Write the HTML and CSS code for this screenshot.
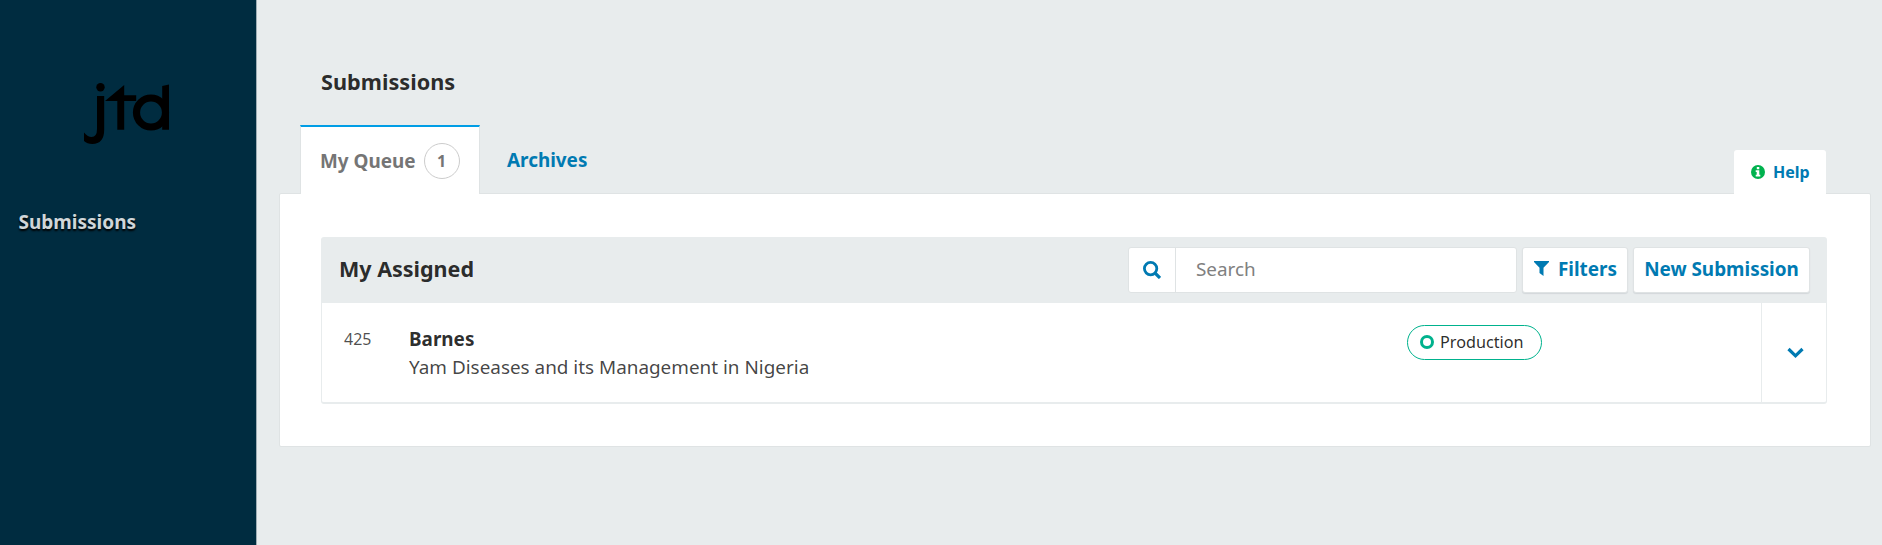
FILE: index.html
```html
<!DOCTYPE html>
<html lang="en">
<head>
<meta charset="utf-8">
<title>Submissions</title>
<link rel="stylesheet" href="styles.css">
</head>
<body>
<div class="app">
  <aside class="sidebar">
    <svg class="logo" width="96" height="70" viewBox="78 78 96 70" role="img" aria-label="jtd">
      <circle cx="100.5" cy="87.300" r="4.200"/>
      <path d="M97 96h7.200v33.500q0 14.500-12 14.500-5 0-8.200-3v-8.500q4 4.500 7.500 4.500 5.500 0 5.500-8z"/>
      <path d="M124.200 85v10.300h12v5.700h-12v28.700h-6.900v-28.700h-12.300z"/>
      <circle cx="151" cy="112.500" r="14.500" fill="none" stroke="#000" stroke-width="7.200"/>
      <path d="M162.200 86l6.800-1.500v45.200h-6.800z"/>
    </svg>
    <nav><a class="nav-link">Submissions</a></nav>
  </aside>
  <main class="main">
    <h1 class="page-title">Submissions</h1>
    <div class="tabs">
      <a class="tab tab-active">My Queue <span class="count">1</span></a>
      <a class="tab">Archives</a>
      <a class="help">
        <svg width="14" height="14" viewBox="0 0 14 14"><circle cx="7" cy="7" r="7" fill="#00b24e"/><path fill="#fff" d="M5.800 2h2.500v2.200H5.800zM4.700 5.300h3.600v4.500h1V11.500H4.700V9.800h1V7h-1z"/></svg>
        <span>Help</span>
      </a>
    </div>
    <section class="panel">
      <div class="list">
        <header class="list-header">
          <h2 class="list-title">My Assigned</h2>
          <div class="search">
            <span class="search-icon"><svg width="18" height="18" viewBox="0 0 18 18" fill="none" stroke="#007ab2"><circle cx="7.600" cy="7.600" r="6.200" stroke-width="2.800"/><path d="M12 12l5 5" stroke-width="3.200"/></svg></span>
            <span class="search-input">Search</span>
          </div>
          <button class="button filters"><svg width="15" height="15" viewBox="0 0 15 15"><path fill="#007ab2" d="M0 0h15v1L9.500 6.800V15L5.500 12V6.800L0 1z"/></svg><span>Filters</span></button>
          <button class="button new">New Submission</button>
        </header>
        <div class="item">
          <span class="item-id">425</span>
          <div class="item-body">
            <div class="item-author">Barnes</div>
            <div class="item-name">Yam Diseases and its Management in Nigeria</div>
          </div>
          <div class="stage"><span class="badge"><i class="dot"></i><span>Production</span></span></div>
          <button class="expander"><svg width="17" height="12" viewBox="0 0 17 12"><path d="M1.500 2L8.500 8.800 15.500 2" fill="none" stroke="#007ab2" stroke-width="3.200"/></svg></button>
        </div>
      </div>
    </section>
  </main>
</div>
</body>
</html>
```
FILE: styles.css
```css
* { box-sizing: border-box; }
body {
  margin: 0;
  background: #e8eced;
  color: rgba(0, 0, 0, 0.84);
  font-family: "Noto Sans", sans-serif;
  font-size: 18.9px;
}
.app { display: flex; height: 545px; overflow: hidden; }
.sidebar {
  width: 257px;
  flex: none;
  background: #002c40;
  border-right: 1px solid #9eadb4;
}
.logo { display: block; margin: 78px 0 0 78px; }
.nav-link {
  display: block;
  margin: 60px 0 0 18.500px;
  line-height: 28px;
  font-size: 19px;
  font-weight: 700;
  color: #d0d6d9;
  text-shadow: 0 2px 2px #000;
}
.main { flex: 1; padding: 61px 11px 0 22px; }
.page-title {
  margin: 0 0 0 42px;
  font-size: 21.7px;
  line-height: 41px;
  font-weight: 700;
}
.tabs {
  display: flex;
  height: 91px;
  padding: 23px 45px 0 21px;
}
.tab {
  display: flex;
  align-items: center;
  padding: 2px 0 0 26px;
  font-weight: 700;
  color: #007ab2;
}
.tab-active {
  width: 180px;
  height: 69px;
  padding: 0 0 0 19px;
  background: #fff;
  border: 1px solid #dfe3e4;
  border-top: 2px solid #009de5;
  border-bottom: 0;
  color: #757575;
  z-index: 1;
}
.tab-active + .tab { padding-left: 27px; }
.count {
  width: 36px;
  height: 36px;
  margin-left: 8px;
  border: 1px solid #ccc;
  border-radius: 50%;
  font-size: 16px;
  line-height: 34px;
  text-align: center;
}
.help {
  display: flex;
  align-items: center;
  gap: 8px;
  width: 92px;
  height: 44px;
  margin: 25px 0 0 auto;
  padding-left: 17px;
  background: #fff;
  border-radius: 3px 3px 0 0;
  font-size: 16px;
  font-weight: 700;
  color: #007ab2;
  z-index: 1;
}
.panel {
  height: 254px;
  padding: 43px 43px 0 41px;
  background: #fff;
  border: 1px solid #dfe3e4;
  border-radius: 2px;
}
.list {
  height: 167px;
  border: 1px solid #e8eced;
  border-bottom-width: 2px;
  border-radius: 3px;
}
.list-header {
  display: flex;
  align-items: center;
  height: 65px;
  padding: 0 16px 2px 17px;
  background: #e8eced;
}
.list-title {
  flex: 1;
  margin: 0;
  padding-bottom: 2px;
  font-size: 21.500px;
  font-weight: 700;
}
.search {
  display: flex;
  width: 389px;
  height: 46px;
  margin-right: 5px;
  background: #fff;
  border: 1px solid #dfe3e4;
  border-radius: 3px;
}
.search-icon {
  display: flex;
  align-items: center;
  justify-content: center;
  width: 47px;
  border-right: 1px solid #dfe3e4;
}
.search-input { padding-left: 20px; line-height: 43px; color: #808080; }
.button {
  display: flex;
  align-items: center;
  justify-content: center;
  height: 46px;
  padding: 0 0 2px;
  background: #fff;
  border: 1px solid #dfe3e4;
  border-radius: 3px;
  box-shadow: 0 1px 1px #d3d8da;
  font-family: inherit;
  font-size: 18.9px;
  font-weight: 700;
  color: #007ab2;
}
.filters { width: 106px; gap: 9px; margin-right: 5px; padding-left: 1px; }
.new { width: 177px; }
.item { display: flex; height: 99px; }
.item-id {
  width: 65px;
  margin-left: 22px;
  padding-top: 24px;
  font-size: 16px;
  line-height: 25px;
  color: rgba(0, 0, 0, 0.7);
}
.item-body { flex: 1; padding-top: 22px; }
.item-author { line-height: 28px; font-weight: 700; }
.item-name { line-height: 29px; color: rgba(0, 0, 0, 0.74); }
.stage { width: 354px; padding-top: 22px; }
.badge {
  display: flex;
  align-items: center;
  gap: 6px;
  width: 135px;
  height: 35px;
  padding: 0 0 1px 12px;
  border: 1px solid #00b28d;
  border-radius: 18px;
  font-size: 16.2px;
}
.dot {
  width: 14px;
  height: 14px;
  border: 3.500px solid #00b28d;
  border-radius: 50%;
}
.expander {
  width: 65px;
  padding: 4px 0 0 2px;
  background: none;
  border: 0;
  border-left: 1px solid #e8eced;
}
```
